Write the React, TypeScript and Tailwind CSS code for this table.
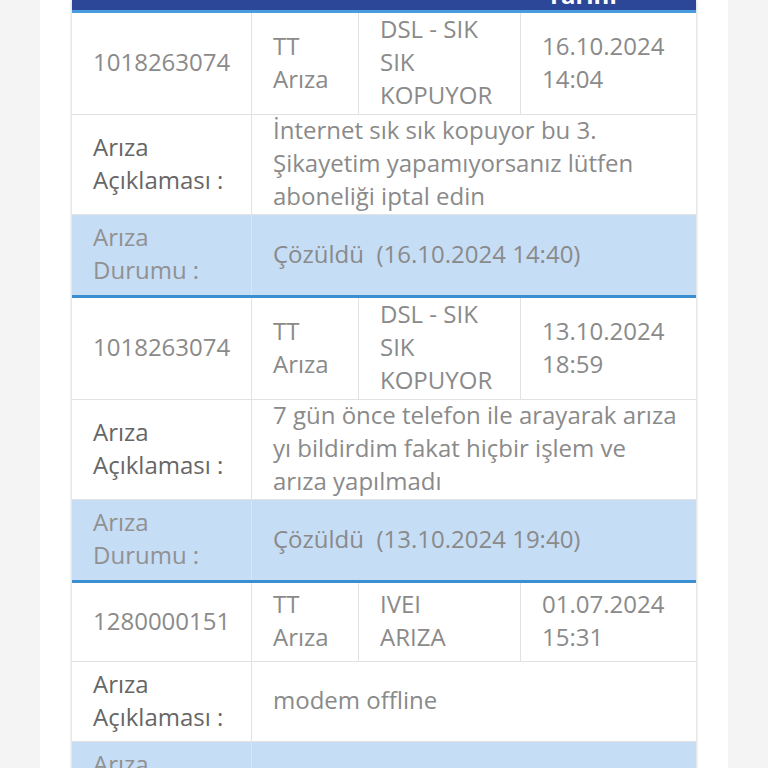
import React from "react";

type Fault = {
  id: string;
  kind: string[];
  topic: string[];
  date: string[];
  desc: string[];
  status: string;
  last?: boolean;
};

const faults: Fault[] = [
  {
    id: "1018263074",
    kind: ["TT", "Arıza"],
    topic: ["DSL - SIK", "SIK", "KOPUYOR"],
    date: ["16.10.2024", "14:04"],
    desc: ["İnternet sık sık kopuyor bu 3.", "Şikayetim yapamıyorsanız lütfen", "aboneliği iptal edin"],
    status: "Çözüldü  (16.10.2024 14:40)",
  },
  {
    id: "1018263074",
    kind: ["TT", "Arıza"],
    topic: ["DSL - SIK", "SIK", "KOPUYOR"],
    date: ["13.10.2024", "18:59"],
    desc: ["7 gün önce telefon ile arayarak arıza", "yı bildirdim fakat hiçbir işlem ve", "arıza yapılmadı"],
    status: "Çözüldü  (13.10.2024 19:40)",
  },
  {
    id: "1280000151",
    kind: ["TT", "Arıza"],
    topic: ["IVEI", "ARIZA"],
    date: ["01.07.2024", "15:31"],
    desc: ["modem offline"],
    status: "",
    last: true,
  },
];

function Lines({ lines }: { lines: string[] }) {
  return (
    <div className="-translate-y-[2px]">
      {lines.map((l, i) => (
        <div key={i} className="whitespace-pre">
          {l}
        </div>
      ))}
    </div>
  );
}

function FaultGroup({ f }: { f: Fault }) {
  return (
    <div>
      <div className="flex border-b border-[#e2e2e2]">
        <div className="flex min-h-[78px] w-[180px] items-center border-r border-[#e2e2e2] pl-[21px]">
          <Lines lines={[f.id]} />
        </div>
        <div className="flex w-[107px] items-center border-r border-[#e2e2e2] pl-[21px]">
          <Lines lines={f.kind} />
        </div>
        <div className="flex w-[162px] items-center border-r border-[#e2e2e2] py-px pl-[21px]">
          <Lines lines={f.topic} />
        </div>
        <div className="flex flex-1 items-center pl-[21px]">
          <Lines lines={f.date} />
        </div>
      </div>
      <div className="flex border-b border-[#e2e2e2]">
        <div className="flex min-h-[79px] w-[180px] items-center border-r border-[#e2e2e2] pl-[21px] text-[#666]">
          <Lines lines={["Arıza", "Açıklaması :"]} />
        </div>
        <div className="flex flex-1 items-center pl-[21px]">
          <Lines lines={f.desc} />
        </div>
      </div>
      <div className="flex bg-[#c6ddf6]">
        <div className="flex h-[80px] w-[180px] items-center border-r border-[#d6e6f7] pl-[21px] text-[#919191]">
          <Lines lines={["Arıza", "Durumu :"]} />
        </div>
        <div className="flex flex-1 items-center pl-[21px]">
          <Lines lines={[f.status]} />
        </div>
      </div>
      {!f.last && <div className="h-[3px] bg-[#3b8fd1]" />}
    </div>
  );
}

export default function App() {
  return (
    <div className="h-[768px] overflow-hidden bg-[#f4f4f4]" style={{ fontFamily: "'Open Sans', Lato, sans-serif" }}>
      <div className="ml-[40px] h-full w-[688px] bg-white px-[32px]">
        <div className="w-[624px] bg-white text-[24px] leading-[33px] text-[#8a8a8a] shadow-[0_0_3px_rgba(0,0,0,0.25)]">
          <div className="h-[10px] overflow-hidden bg-[#2c4797]">
            <div className="-mt-[22px] flex font-bold text-white">
              <div className="w-[180px]" />
              <div className="w-[107px]" />
              <div className="w-[162px]" />
              <div className="flex-1 pl-[26px]">Tarihi</div>
            </div>
          </div>
          <div className="h-[3px] bg-[#4a9ce0]" />
          {faults.map((f, i) => (
            <FaultGroup key={i} f={f} />
          ))}
        </div>
      </div>
    </div>
  );
}
